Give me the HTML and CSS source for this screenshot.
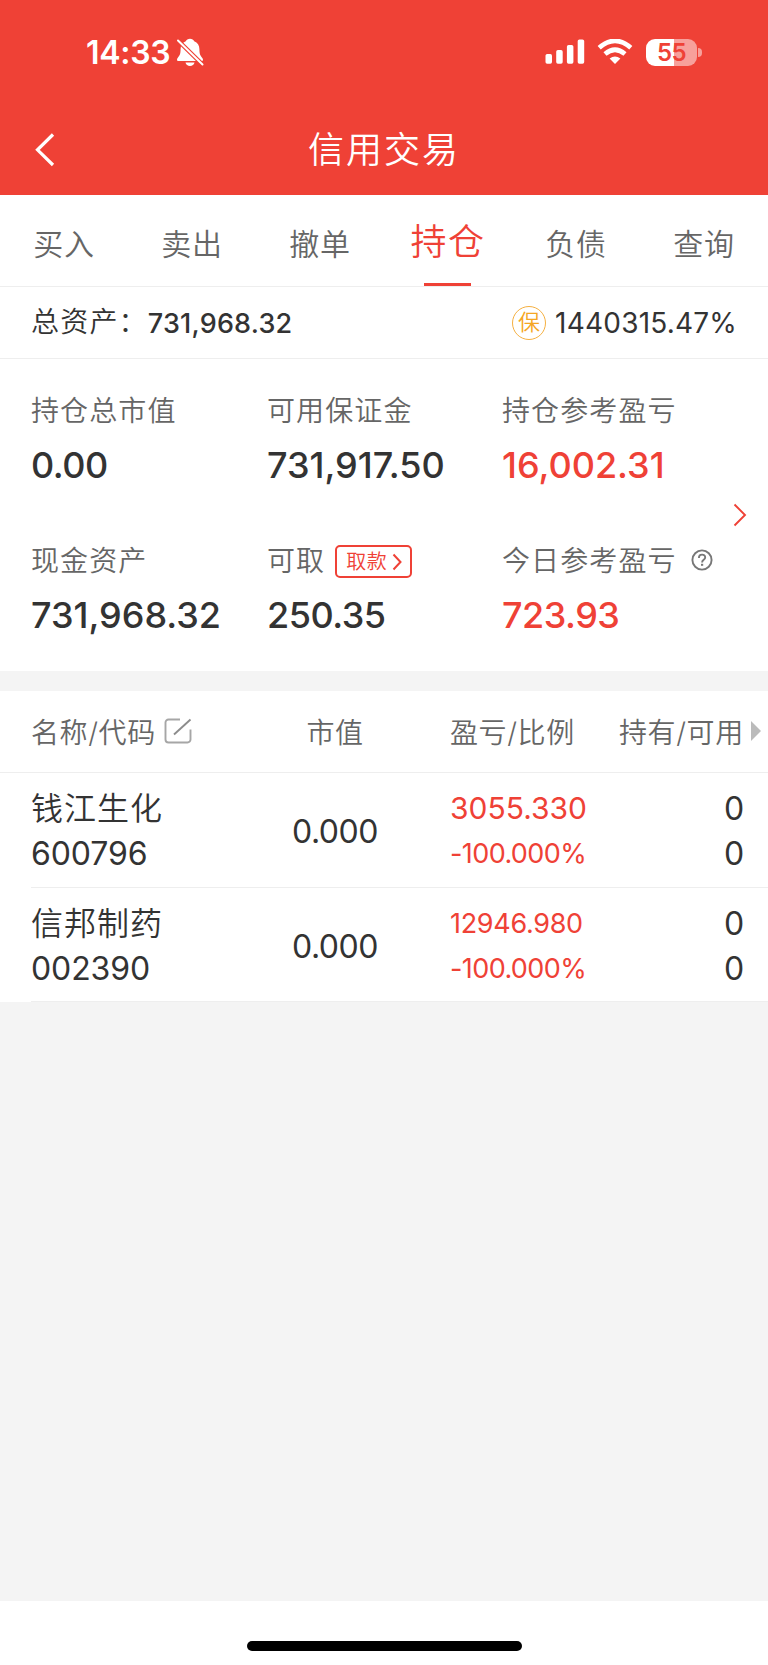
FILE: index.html
```html
<!DOCTYPE html>
<html lang="zh-CN">
<head>
<meta charset="utf-8">
<title>信用交易</title>
<link rel="stylesheet" href="styles.css">
</head>
<body>
<div class="app">
  <header class="header">
    <div class="status">
      <span class="clock">14:33</span>
      <svg class="bell" viewBox="0 0 28 30" width="28" height="30">
        <g fill="#fff"><path d="M14 1.800c-2 0-3.600 1-4.200 2.500C6.400 5.600 4.600 8.500 4.600 12c0 5.500-1.200 6.800-2.800 8.700-.6.700-.8 1.200-.8 2 0 .8.600 1.300 1.500 1.300h23c.9 0 1.500-.5 1.500-1.300 0-.8-.3-1.300-.9-2-1.500-1.900-2.700-3.200-2.700-8.700 0-3.500-1.800-6.400-5.200-7.700C17.600 2.800 16 1.800 14 1.800z"/><path d="M9.500 25.500h9c-.4 2-2.200 3.500-4.500 3.500s-4.100-1.500-4.500-3.500z"/></g>
        <path d="M2 3.500 26.500 27.500" stroke="#ef4136" stroke-width="4.400"/>
        <path d="M2 3.500 26.500 27.500" stroke="#fff" stroke-width="2" stroke-linecap="round"/>
      </svg>
      <svg class="signal" viewBox="0 0 40 26" width="40" height="26" fill="#fff"><rect x="0.500" y="15" width="6.500" height="9.700" rx="1.700"/><rect x="11.200" y="11" width="6.500" height="13.700" rx="1.700"/><rect x="21.900" y="6" width="6.500" height="18.700" rx="1.700"/><rect x="32.700" y="0.400" width="6.500" height="24.300" rx="1.700"/></svg>
      <svg class="wifi" viewBox="0 0 36 26" width="36" height="26"><g fill="none" stroke="#fff" stroke-width="4.700"><path d="M2.200 8.800Q18-5 33.800 8.800"/><path d="M8 15Q18 6.400 28 15"/></g><path d="M18 25 12.600 19.600Q18 15.400 23.400 19.600Z" fill="#fff"/></svg>
      <span class="battery"><span class="battery-text">55</span></span>
      <span class="battery-cap"></span>
    </div>
    <div class="titlebar">
      <svg class="back" viewBox="0 0 20 34" width="20" height="34"><path d="M18 1.500 2.500 16.800 18 32" fill="none" stroke="#fff" stroke-width="3.200"/></svg>
      <h1 class="title">信用交易</h1>
    </div>
  </header>
  <nav class="tabs">
    <a class="tab">买入</a><a class="tab">卖出</a><a class="tab">撤单</a><a class="tab active">持仓</a><a class="tab">负债</a><a class="tab">查询</a>
  </nav>
  <section class="total">
    <span class="total-label">总资产：</span><b class="total-value">731,968.32</b>
    <span class="badge">保</span><span class="ratio">1440315.47%</span>
  </section>
  <section class="metrics">
    <div class="metric"><div class="label">持仓总市值</div><div class="value tight">0.00</div></div>
    <div class="metric"><div class="label">可用保证金</div><div class="value">731,917.50</div></div>
    <div class="metric"><div class="label">持仓参考盈亏</div><div class="value red">16,002.31</div></div>
    <div class="metric"><div class="label">现金资产</div><div class="value">731,968.32</div></div>
    <div class="metric"><div class="label">可取<span class="withdraw">取款<svg viewBox="0 0 10 18" width="10" height="18"><path d="M1.500 1.500 8.500 9 1.500 16.500" fill="none" stroke="#ef4136" stroke-width="2"/></svg></span></div><div class="value tight">250.35</div></div>
    <div class="metric"><div class="label">今日参考盈亏<svg class="help" viewBox="0 0 22 22" width="22" height="22" fill="none" stroke="#777"><circle cx="11" cy="11" r="9.600" stroke-width="1.900"/><path d="M7.900 8.900C7.900 4.600 14.200 4.700 14.200 8.500c0 2.400-3.100 2.300-3.100 4.900" stroke-width="1.900"/><path d="M11.100 14.800v2" stroke-width="2.200"/></svg></div><div class="value tight red">723.93</div></div>
    <svg class="more" viewBox="0 0 14 24" width="14" height="24"><path d="M1.500 1.500 12 12 1.500 22.500" fill="none" stroke="#ef4136" stroke-width="1.900"/></svg>
  </section>
  <section class="table">
    <div class="thead">
      <div>名称/代码<svg class="edit" viewBox="0 0 28 26" width="28" height="26" fill="none" stroke="#a6a6a6" stroke-width="1.900"><path d="M16 1.500H4.500a3 3 0 0 0-3 3v17a3 3 0 0 0 3 3h19a3 3 0 0 0 3-3V11.500"/><path d="M10 16.500 26.500 1.500" stroke="#8c8c8c"/></svg></div>
      <div class="center">市值</div>
      <div class="gain">盈亏/比例</div>
      <div class="hold">持有/可用<i class="arrow"></i></div>
    </div>
    <div class="row">
      <div><div class="name">钱江生化</div><div class="num">600796</div></div>
      <div class="num center">0.000</div>
      <div class="gain red"><div class="pl">3055.330</div><div class="pct">-100.000%</div></div>
      <div class="qty"><div class="num">0</div><div class="num">0</div></div>
    </div>
    <div class="row">
      <div><div class="name">信邦制药</div><div class="num">002390</div></div>
      <div class="num center">0.000</div>
      <div class="gain red"><div class="pl small">12946.980</div><div class="pct">-100.000%</div></div>
      <div class="qty"><div class="num">0</div><div class="num">0</div></div>
    </div>
  </section>
  <footer class="footer"><div class="home"></div></footer>
</div>
</body>
</html>
```

FILE: styles.css
```css
* { box-sizing: border-box; }
body {
  margin: 0;
  background: #f4f4f4;
  font-family: Inter, "Noto Sans CJK SC", sans-serif;
  color: #333;
}
svg { display: block; flex: none; }
.app { width: 768px; height: 1665px; display: flex; flex-direction: column; overflow: hidden; }
.red { color: #ef4136; }

.header { height: 195px; background: #ef4136; color: #fff; }
.status { height: 104px; padding: 0 66px 0 86px; display: flex; align-items: center; }
.clock { padding-top: 2px; font-size: 32px; font-weight: 600; line-height: 40px; letter-spacing: -0.300px; }
.bell { margin-left: 6px; }
.signal { margin-left: auto; }
.wifi { margin-left: 12px; }
.battery {
  width: 51px; height: 27px; margin-left: 13px; border-radius: 9px;
  background: linear-gradient(90deg, #fff 28px, #f7a09b 28px);
  color: #ef4136; text-align: center;
}
.battery-text { display: block; font-size: 24px; font-weight: 600; line-height: 27px; letter-spacing: -0.500px; }
.battery-cap { width: 4px; height: 9px; margin-left: 1px; background: #f7a09b; border-radius: 0 4px 4px 0; }
.titlebar { height: 91px; display: grid; grid-template-columns: 56px 1fr 56px; align-items: center; }
.back { margin-left: 35px; }
.title { margin: 0; padding-top: 1px; text-align: center; font-size: 36px; font-weight: 350; letter-spacing: 2px; line-height: 50px; }

.tabs { height: 92px; display: grid; grid-template-columns: repeat(6, 128px); border-bottom: 1px solid #eee; background: #fff; }
.tab { text-align: center; font-size: 30px; font-weight: 350; letter-spacing: 0.800px; color: #666; line-height: 98px; height: 91px; }
.active { position: relative; font-size: 36px; letter-spacing: 1.500px; color: #ef4136; line-height: 95px; }
.active::after { content: ""; position: absolute; left: 40px; bottom: 0; width: 47px; height: 3px; background: #ef4136; }

.total { height: 72px; padding: 0 31px; display: flex; align-items: center; border-bottom: 1px solid #eee; background: #fff; }
.total-label { padding-bottom: 1px; font-size: 28px; font-weight: 350; line-height: 40px; letter-spacing: 1.200px; }
.total-value { padding-top: 1px; font-size: 27px; font-weight: 500; letter-spacing: 0.200px; }
.badge {
  width: 34px; height: 34px; margin-left: auto; border: 1.500px solid #f5b041; border-radius: 50%;
  color: #f5a623; font-size: 22px; font-weight: 350; line-height: 31px; text-align: center;
}
.ratio { margin-left: 9px; font-size: 28px; letter-spacing: 0.200px; }

.metrics {
  position: relative; height: 312px; padding: 30px 0 0 31px; background: #fff;
  display: grid; grid-template-columns: 236px 235px 1fr; grid-auto-rows: 150px;
}
.label { display: flex; align-items: center; height: 40px; font-size: 28px; font-weight: 350; letter-spacing: 1.100px; color: #666; }
.value { margin-top: 13px; font-size: 36px; font-weight: 500; line-height: 46px; }
.tight { letter-spacing: -0.500px; }
.withdraw {
  width: 77px; height: 33px; margin: 5px 0 0 10px; padding-left: 9px; border: 2px solid #ef4136; border-radius: 5px;
  display: flex; align-items: center; gap: 5px; color: #ef4136; font-size: 20px; line-height: 30px; letter-spacing: 0.500px;
}
.help { margin: 1px 0 0 14px; }
.more { position: absolute; right: 21px; top: 144px; }

.table { margin-top: 20px; background: #fff; }
.thead, .row { display: grid; grid-template-columns: 236px 136px 216px 1fr; }
.thead { height: 82px; padding: 0 0 1px 31px; align-items: center; border-bottom: 1px solid #eee; font-size: 28px; font-weight: 350; letter-spacing: 0.600px; color: #666; }
.thead > div { display: flex; align-items: center; }
.thead > .center { justify-content: center; }
.gain { padding-left: 47px; }
.edit { margin-left: 8px; }
.arrow { margin-left: 7px; border-left: 10px solid #bbb; border-top: 10px solid transparent; border-bottom: 10px solid transparent; }
.row { height: 115px; margin-left: 31px; padding: 13px 24px 0 0; border-bottom: 1px solid #eee; }
.row:last-child { height: 114px; }
.center { text-align: center; }
.name { font-size: 32px; font-weight: 350; letter-spacing: 1px; line-height: 45px; }
.num { font-size: 32px; line-height: 45px; letter-spacing: -0.100px; }
.row > .center { line-height: 91px; letter-spacing: -0.500px; }
.pl { font-size: 30px; line-height: 45px; }
.pct { font-size: 27px; line-height: 45px; letter-spacing: -0.600px; }
.small { font-size: 27px; letter-spacing: -0.300px; }
.qty { text-align: right; }

.footer { height: 64px; margin-top: auto; padding-top: 40px; background: #fff; }
.home { width: 275px; height: 10px; margin: 0 auto; border-radius: 5px; background: #000; }
```
